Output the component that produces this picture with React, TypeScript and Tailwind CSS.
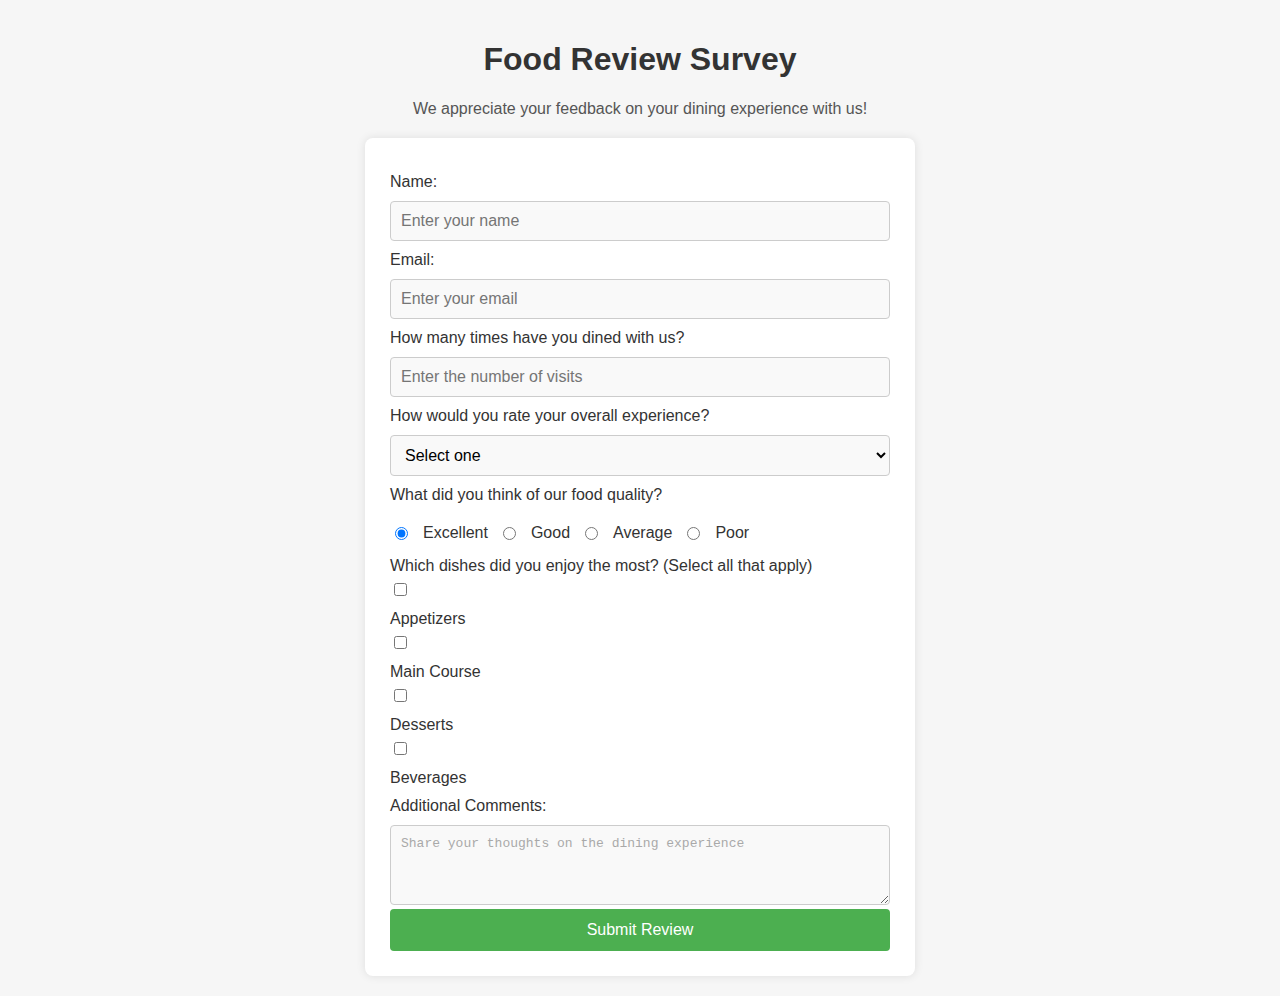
import React, { useState } from "react";

const fieldClass =
  "block w-full h-[40px] px-[10px] bg-[#f9f9f9] border border-[#cccccc] rounded-[4px] text-[16px] text-[#333333] placeholder:text-[#757575] outline-none";

const QUALITY = ["Excellent", "Good", "Average", "Poor"];
const DISHES = ["Appetizers", "Main Course", "Desserts", "Beverages"];

// Simple food review survey form
export default function App() {
  const [quality, setQuality] = useState("Excellent");

  return (
    <div className="min-h-screen bg-[#f6f6f6] pt-[41px] pb-[20px] font-['Liberation_Sans',Arial,sans-serif] text-[#333333]">
      <h1 className="text-center text-[32px] leading-[37px] font-bold text-[#333333]">
        Food Review Survey
      </h1>
      <p className="mt-[21px] text-center text-[16px] leading-[20px] text-[#555555]">
        We appreciate your feedback on your dining experience with us!
      </p>

      <form
        className="mx-auto mt-[19px] w-[550px] bg-white rounded-[8px] shadow-[0_0_10px_rgba(0,0,0,0.1)] px-[25px] pt-[34px] pb-[25px]"
        onSubmit={(e) => e.preventDefault()}
      >
        <label className="block text-[16px] leading-[20px]">Name:</label>
        <input type="text" placeholder="Enter your name" className={`${fieldClass} mt-[9px]`} />

        <label className="block mt-[9px] text-[16px] leading-[20px]">Email:</label>
        <input type="email" placeholder="Enter your email" className={`${fieldClass} mt-[9px]`} />

        <label className="block mt-[9px] text-[16px] leading-[20px]">
          How many times have you dined with us?
        </label>
        <input
          type="text"
          placeholder="Enter the number of visits"
          className={`${fieldClass} mt-[9px]`}
        />

        <label className="block mt-[9px] text-[16px] leading-[20px]">
          How would you rate your overall experience?
        </label>
        <select
          defaultValue=""
          className="block w-full h-[41px] mt-[9px] pl-[10px] pr-[4px] bg-[#f9f9f9] border border-[#cccccc] rounded-[4px] text-[16px] text-black outline-none"
        >
          <option value="">Select one</option>
          <option>Excellent</option>
          <option>Good</option>
          <option>Average</option>
          <option>Poor</option>
        </select>

        <label className="block mt-[9px] text-[16px] leading-[20px]">
          What did you think of our food quality?
        </label>
        <div className="mt-[18px] flex items-center h-[20px] text-[16px]">
          {QUALITY.map((q) => (
            <label key={q} className="flex items-center mr-[10px]">
              <input
                type="radio"
                name="quality"
                checked={quality === q}
                onChange={() => setQuality(q)}
                className="ml-[5px] w-[13px] h-[13px]"
              />
              <span className="ml-[15px] leading-[20px]">{q}</span>
            </label>
          ))}
        </div>

        <label className="block mt-[13px] text-[16px] leading-[20px]">
          Which dishes did you enjoy the most? (Select all that apply)
        </label>
        {DISHES.map((d) => (
          <div key={d}>
            <input type="checkbox" className="block mt-[7px] ml-[4px] w-[13px] h-[13px]" />
            <label className="block mt-[13px] text-[16px] leading-[20px]">{d}</label>
          </div>
        ))}

        <label className="block mt-[8px] text-[16px] leading-[20px]">Additional Comments:</label>
        <textarea
          placeholder="Share your thoughts on the dining experience"
          className="block w-full h-[80px] mt-[9px] px-[10px] py-[10px] bg-[#f9f9f9] border border-[#cccccc] rounded-[4px] font-['Liberation_Mono',monospace] text-[13px] leading-[15px] placeholder:text-[#a9a9a9] outline-none"
        />

        <button
          type="submit"
          className="block w-full h-[42px] mt-[4px] bg-[#4caf50] text-white text-[16px] rounded-[4px]"
        >
          Submit Review
        </button>
      </form>
    </div>
  );
}
